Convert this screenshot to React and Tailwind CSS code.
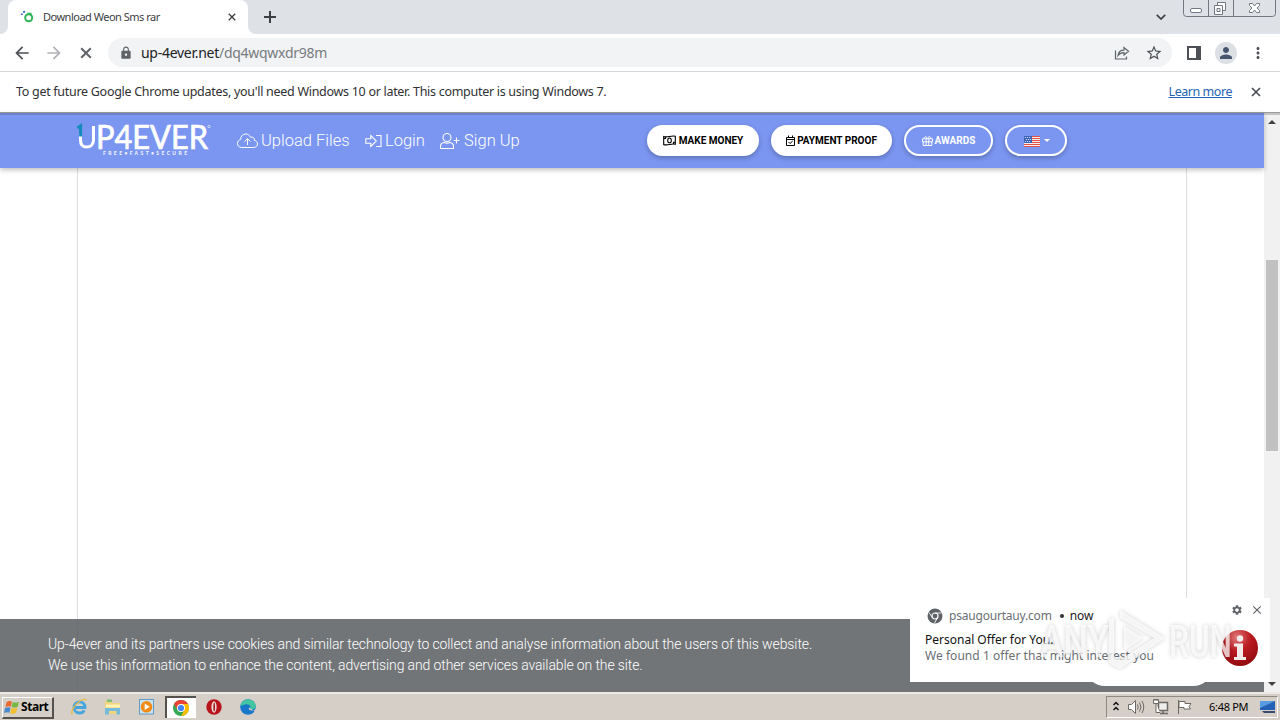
import { MdLock, MdStarBorder, MdPerson, MdMoreVert, MdArrowBack, MdArrowForward, MdClose, MdSettings } from "react-icons/md"

const ui = "font-['Noto_Sans',sans-serif]"
const web = "font-['Roboto',sans-serif]"

const Favicon = () => (
  <svg className="w-4 h-4" viewBox="0 0 16 16" fill="none">
    <path d="M1.800 6V4.500M3.300 3.500L4.800 2.200" stroke="#2f62c8" strokeWidth="1.800" />
    <circle cx="8.700" cy="8.800" r="3.500" stroke="#2fb457" strokeWidth="2" />
    <path d="M6.500 3.800h5v2.500z" fill="#2fb457" />
  </svg>
)

const CrossIcon = ({ className }) => (
  <svg className={className} viewBox="0 0 10 10" fill="none" stroke="currentColor" strokeWidth="1.7">
    <path d="M1 1l8 8M9 1L1 9" />
  </svg>
)

const ShareIcon = () => (
  <svg className="w-4 h-4" viewBox="0 0 16 16" fill="none" stroke="#5f6368" strokeWidth="1.2">
    <path d="M1.500 5.500V14H12.500V11.500" />
    <path d="M4 10.500C4.500 6.800 7 5.200 10 5.200V2.500L14.500 6.300L10 10V7.700C7.500 7.700 5.500 8.500 4 10.500z" />
  </svg>
)

const PanelIcon = () => (
  <svg className="w-[14px] h-[14px]" viewBox="0 0 14 14">
    <rect x="1" y="1" width="12" height="12" fill="none" stroke="#4d5156" strokeWidth="2" />
    <path d="M9 1h4v12H9z" fill="#4d5156" />
  </svg>
)

const CloudIcon = () => (
  <svg className="w-[21px] h-[16px]" viewBox="0 0 21 16" fill="none" stroke="#fff" strokeWidth="1">
    <path d="M4.5 14.5 H16.5 C19 14.5 20.5 12.8 20.5 11 C20.5 9 19 7.7 17.4 7.5 C17.8 5 16 3.6 13.7 4.3 C12.5 2 10.8 1 8.8 1 C5.8 1 3.6 3.2 3.7 6.3 C1.7 7 .5 8.5 .5 10.5 C.5 12.8 2.3 14.5 4.5 14.5z" />
    <path d="M10.500 12V5.800M7.500 8.600l3-3 3 3" />
  </svg>
)

const LoginIcon = () => (
  <svg className="w-[17px] h-[14px]" viewBox="0 0 17 14" fill="none" stroke="#fff" strokeWidth="1.100">
    <path d="M.8 4.700h5V1.500L11.300 7l-5.500 5.500V9.300h-5z" />
    <path d="M11 1.500h5v11h-5" />
  </svg>
)

const UserPlusIcon = () => (
  <svg className="w-[20px] h-[16px]" viewBox="0 0 20 16" fill="none" stroke="#fff" strokeWidth="1.100">
    <circle cx="7" cy="4.500" r="4" />
    <path d="M4.300 9.500C2 9.800.5 11.200.5 13.200V15.500H13.500V13.200C13.500 11.200 12 9.800 9.700 9.500C8 10.300 6 10.300 4.300 9.500z" />
    <path d="M13.500 7.500h6M16.500 4.500v6" />
  </svg>
)

const MoneyIcon = () => (
  <svg className="w-[13px] h-[11px]" viewBox="0 0 13 11" fill="none" stroke="#000" strokeWidth="1.1">
    <path d="M.7 1.500C4.500 3 8 .2 12.300 1.200V9.300C8.500 8.200 5 10.800.7 9.600z" />
    <ellipse cx="6.500" cy="5.400" rx="1.800" ry="2.400" />
    <path d="M.7 3.500h1.800V2M12.300 7.200h-1.800v1.800" />
  </svg>
)

const CalendarIcon = () => (
  <svg className="w-[9px] h-[11px]" viewBox="0 0 9 11" fill="none" stroke="#000" strokeWidth="1">
    <path d="M.5 2.500h8v8h-8zM.5 4.500h8M2.500.5v2M6.500.5v2M2.500 7l1.500 1.500 2.700-2.500" />
  </svg>
)

const GiftIcon = () => (
  <svg className="w-[11px] h-[10px]" viewBox="0 0 11 10" fill="none" stroke="#fff" strokeWidth="1">
    <path d="M.5 2.800h10v3H.5zM1.200 5.800v3.700h8.600V5.800M4.200 2.800v6.700M6.800 2.800v6.700M5.500 2.600C4.700.2 2 .1 2.200 2.600M5.500 2.600C6.300.2 9 .1 8.800 2.600" />
  </svg>
)

const FlagUS = () => (
  <svg className="w-4 h-[11px] mt-[2px]" viewBox="0 0 16 11" shapeRendering="crispEdges">
    <path fill="#f8eeee" d="M0 0h16v11H0z" />
    <path fill="#df5145" d="M0 0h16v1H0zM0 2h16v1H0zM0 4h16v1H0zM0 6h16v1H0zM0 8h16v1H0zM0 10h16v1H0z" />
    <path fill="#4064b4" d="M0 0h8v7H0z" />
    <path fill="#c9d6f0" d="M1 1h1v1H1zM3 1h1v1H3zM5 1h1v1H5zM2 3h1v1H2zM4 3h1v1H4zM6 3h1v1H6zM1 5h1v1H1zM3 5h1v1H3zM5 5h1v1H5z" />
  </svg>
)

const Logo = () => (
  <svg className="overflow-visible" width="134" height="34" viewBox="0 0 134 34" fill="none">
    <path d="M3.500 12V18C3.500 22.300 5.700 25 9.500 25C13.800 25 16.500 22.300 16.500 18V4" stroke="#fff" strokeWidth="3" />
    <path d="M.5 6L3.600 3.800V14.500" stroke="#1689bd" strokeWidth="3" />
    <text x="19" y="26.500" fill="#fff" fontFamily="Lato" fontWeight="400" stroke="#fff" strokeWidth=".7" fontSize="32" textLength="112" lengthAdjust="spacingAndGlyphs">P4EVER</text>
    <text x="26" y="33" fill="#fff" fillOpacity=".9" fontFamily="Lato" fontWeight="900" fontSize="5" textLength="84">FREE•FAST•SECURE</text>
    <circle cx="132" cy="4.500" r="1.200" stroke="#fff" strokeWidth=".6" />
  </svg>
)

const BrowserTabs = () => (
  <div className="h-[34px] bg-[#dee1e6] flex justify-between shrink-0">
    <div className="flex">
      <div className="w-2 bg-white"><div className="h-full bg-[#dee1e6] rounded-br-lg" /></div>
      <div className="w-[240px] h-[34px] bg-white rounded-t-lg flex items-center pl-3 pr-3">
        <Favicon />
        <span className="ml-[7px] text-[11px] tracking-[-0.5px] text-[#3c4043] whitespace-nowrap">Download Weon Sms rar</span>
        <CrossIcon className="ml-auto w-2 h-2 text-[#3c4043]" />
      </div>
      <div className="w-2 bg-white"><div className="h-full bg-[#dee1e6] rounded-bl-lg" /></div>
      <svg className="ml-2 mt-[11px]" width="12" height="12" viewBox="0 0 12 12" stroke="#3c4043" strokeWidth="2">
        <path d="M6 0v12M0 6h12" />
      </svg>
    </div>
    <div className="flex items-start">
      <svg className="mt-[14px] mr-[17px]" width="10" height="6" viewBox="0 0 10 6" fill="none" stroke="#3c4043" strokeWidth="1.700">
        <path d="M.8.8L5 5 9.200.8" />
      </svg>
      <svg className="mr-1" width="93" height="17" viewBox="0 0 93 17" fill="none" stroke="#73777f">
        <path d="M.5 0V13.500Q.5 16.500 3.500 16.500H89.500Q92.500 16.500 92.500 13.500V0M25.500 0V16M50.500 0V16" />
        <rect x="7.500" y="8.500" width="11" height="4" rx="1.500" fill="#fff" />
        <path d="M34.500 5V2.500h8v8h-2.500M31.500 5.500h8v9h-8zM34 8.500h3v3h-3z" fill="#fff" />
        <path d="M66.500 3.500h3l2 2.500 2-2.500h3v2l-2.500 2.500 2.500 2.500v2h-3l-2-2.500-2 2.500h-3v-2l2.500-2.500-2.500-2.500z" fill="#fff" />
      </svg>
    </div>
  </div>
)

const Toolbar = () => (
  <div className="h-[38px] bg-white border-b border-[#d5d7da] flex items-center shrink-0">
    <div className="flex items-center gap-3 pl-3 w-[108px] shrink-0">
      <MdArrowBack className="w-5 h-5 text-[#4d5156]" />
      <MdArrowForward className="w-5 h-5 text-[#b0b2b5]" />
      <CrossIcon className="w-3 h-3 ml-1 text-[#5f6368]" />
    </div>
    <div className="w-[1064px] h-[29px] rounded-full bg-[#f1f3f4] flex items-center pl-[11px] pr-[9px]">
      <MdLock className="w-[14px] h-[14px] text-[#5f6368]" />
      <span className="ml-2 text-[14px] tracking-[-0.28px] text-[#202124]">
        up-4ever.net<span className="text-[#777b80]">/dq4wqwxdr98m</span>
      </span>
      <div className="ml-auto flex items-center gap-[15px]">
        <ShareIcon />
        <MdStarBorder className="w-[18px] h-[18px] text-[#4d5156]" />
      </div>
    </div>
    <div className="ml-[15px] flex items-center">
      <PanelIcon />
      <div className="ml-[14px] w-[22px] h-[22px] rounded-full bg-[#dcdfe3] flex items-center justify-center">
        <MdPerson className="w-[18px] h-[18px] text-[#46546e]" />
      </div>
      <MdMoreVert className="ml-3 w-[18px] h-[18px] text-[#4d5156]" />
    </div>
  </div>
)

const InfoBar = () => (
  <div className="h-[41px] bg-white border-b border-[#9a9ca0] flex items-center pl-4 pr-[19px] text-[12.5px] text-[#303134] shrink-0">
    <span className="tracking-[-0.29px] whitespace-nowrap">
      To get future Google Chrome updates, you'll need Windows 10 or later. This computer is using Windows 7.
    </span>
    <span className="ml-auto tracking-[-0.45px] text-[#2464b4] underline">Learn more</span>
    <CrossIcon className="ml-[19px] w-[10px] h-[10px] text-[#4d5156]" />
  </div>
)

const NavBar = () => (
  <nav className={`relative h-[55px] bg-[#7b96f1] shadow-[0_2px_5px_rgba(0,0,0,0.25)] border-t-2 border-[#6c80c5] flex items-start shrink-0 text-white ${web}`}>
    <div className="ml-[77px] mt-[7px]"><Logo /></div>
    <div className="ml-[26px] mt-[14px] h-6 flex items-center font-light text-[16.5px] whitespace-nowrap">
      <span className="w-[128px] flex items-center gap-[3px]"><CloudIcon />Upload Files</span>
      <span className="w-[75px] flex items-center gap-[3px]"><LoginIcon />Login</span>
      <span className="w-[82px] flex items-center gap-[4px]"><UserPlusIcon />Sign Up</span>
    </div>
    <div className="ml-[125px] mt-[10px] flex gap-3 text-[10px] font-bold whitespace-nowrap">
      <span className="w-[112px] h-[31px] rounded-full bg-white text-black flex items-center justify-center gap-[3px] shadow-[0_2px_5px_rgba(0,0,0,0.25)]"><MoneyIcon />MAKE MONEY</span>
      <span className="w-[121px] h-[31px] rounded-full bg-white text-black flex items-center justify-center gap-[2px] shadow-[0_2px_5px_rgba(0,0,0,0.25)]"><CalendarIcon />PAYMENT PROOF</span>
      <span className="w-[89px] h-[31px] rounded-full border-2 border-white flex items-center justify-center gap-[2px] shadow-[0_2px_5px_rgba(0,0,0,0.25)]"><GiftIcon />AWARDS</span>
      <span className="w-[62px] h-[31px] rounded-full border-2 border-white flex items-center pl-[17px] gap-1 shadow-[0_2px_5px_rgba(0,0,0,0.25)]">
        <FlagUS />
        <span className="w-0 h-0 border-x-[3px] border-x-transparent border-t-[3px] border-t-white" />
      </span>
    </div>
  </nav>
)

const CookieBar = () => (
  <div className={`absolute left-0 bottom-0 w-[1264px] h-[73px] bg-[#56595d]/83 pl-12 pt-[15px] text-white font-light text-[14px] leading-[21px] ${web}`}>
    <p className="tracking-[-0.105px]">Up-4ever and its partners use cookies and similar technology to collect and analyse information about the users of this website.</p>
    <p className="tracking-[-0.12px]">We use this information to enhance the content, advertising and other services available on the site.</p>
  </div>
)

const Watermark = () => (
  <svg className="absolute left-[128px] top-[8px] overflow-visible" width="200" height="70" viewBox="0 0 200 70">
    <g className="drop-shadow-[0_0_2px_rgba(0,0,0,0.25)]" fill="#fff" fillOpacity=".75">
      <text x="2" y="51" fontFamily="Roboto" fontWeight="500" fontSize="45" textLength="69" lengthAdjust="spacingAndGlyphs">ANY</text>
      <text x="131" y="51" fontFamily="Roboto" fontWeight="500" fontSize="45" textLength="63" lengthAdjust="spacingAndGlyphs">RUN</text>
      <path fillRule="evenodd" d="M82 4L127 32L82 63L71 57V14L76 11V50L82 54L116 32L82 12zM86 20L105 32L86 45z" />
    </g>
  </svg>
)

const Notification = () => (
  <div className="absolute left-[910px] bottom-[10px] w-[360px] h-[84px] bg-white">
    <div className="flex items-center h-9 pl-[17px] pr-[6px] text-[12px]">
      <svg className="w-4 h-4" viewBox="0 0 16 16">
        <circle cx="8" cy="8" r="7.500" fill="#5f6368" />
        <circle cx="8" cy="8" r="3" fill="#5f6368" stroke="#fff" strokeWidth="1.200" />
        <path d="M8 5h6.500M5.400 9.500L2 4.500M10.600 9.500L7.500 15" stroke="#fff" strokeWidth=".9" />
      </svg>
      <span className="ml-[6px] tracking-[-0.2px] text-[#6b6f74]">psaugourtauy.com</span>
      <span className="ml-2 w-1 h-1 rounded-full bg-[#303134]" />
      <span className="ml-[6px] text-[#202124]">now</span>
      <MdSettings className="ml-auto mb-3 w-3 h-3 text-[#5f6368]" />
      <MdClose className="ml-[7px] mb-3 w-[14px] h-[14px] text-[#5f6368]" />
    </div>
    <div className="pl-[15px] -mt-[2px] text-[12px] leading-4 whitespace-nowrap">
      <p className="text-[#111]">Personal Offer for You.</p>
      <p className="tracking-[0.04px] text-[#6b6f74]">We found 1 offer that might interest you</p>
    </div>
    <svg className="absolute left-[311px] top-[31px]" width="38" height="38" viewBox="0 0 38 38">
      <defs>
        <radialGradient id="info" cx=".4" cy=".2" r=".85">
          <stop offset="0" stopColor="#e1777a" />
          <stop offset=".45" stopColor="#ba1b21" />
          <stop offset="1" stopColor="#8e080e" />
        </radialGradient>
      </defs>
      <circle cx="19" cy="19" r="18" fill="url(#info)" />
      <circle cx="19" cy="9.500" r="3.200" fill="#f4eaea" />
      <path d="M13 14.500h9V28h3v3H13v-3h3V17.500h-3z" fill="#f4eaea" />
    </svg>
    <Watermark />
  </div>
)

const ScrollBar = () => (
  <div className="w-4 bg-[#f1f1f1] border-t-2 border-[#c4c4c4] flex flex-col items-center shrink-0">
    <span className="mt-[5px] border-x-4 border-x-transparent border-b-4 border-b-[#404040]" />
    <span className="mt-[136px] w-3 h-[191px] bg-[#c1c1c1]" />
    <span className="mt-auto mb-[6px] border-x-4 border-x-transparent border-t-4 border-t-[#404040]" />
  </div>
)

const IeIcon = () => (
  <svg className="w-[18px] h-[18px]" viewBox="0 0 18 18" fill="none">
    <path d="M4 9.500H15C15 6 12.500 3.800 9.500 3.800S4 6.200 4 9.500s2.500 5.500 5.500 5.500c2 0 3.800-.8 4.700-2.700" stroke="#45a5df" strokeWidth="2.800" />
    <path d="M2.500 16.500C-1.500 13 11-1.500 16.500 2" stroke="#e4bd45" strokeWidth="1.400" />
  </svg>
)

const FolderIcon = () => (
  <svg className="w-[18px] h-[18px]" viewBox="0 0 18 18">
    <path d="M1 3h6l1 2h8v11H1z" fill="#efd67d" />
    <path d="M3 1.500h5V4H3z" fill="#81bd75" />
    <path d="M2 6.500h14v3H2z" fill="#fff2b5" />
    <path d="M1 10h15v6.500h-3.500V13H5v3.500H1z" fill="#76bbdc" />
  </svg>
)

const MediaIcon = () => (
  <svg className="w-[18px] h-[18px]" viewBox="0 0 18 18">
    <rect x="1.500" y="1.500" width="14" height="14.500" fill="#c8e3f4" stroke="#609ac6" />
    <circle cx="8.500" cy="8.800" r="5.800" fill="#f28b16" />
    <path d="M6.700 5.500v6.600l5-3.300z" fill="#fff" />
  </svg>
)

const ChromeIcon = () => (
  <svg className="w-4 h-4" viewBox="0 0 16 16">
    <circle cx="8" cy="8" r="8" fill="#34a853" />
    <path d="M1.070 4A8 8 0 0 1 14.930 4H8L4.540 10z" fill="#ea4335" />
    <path d="M14.930 4A8 8 0 0 1 8 16L11.460 10 8 4z" fill="#fbbc04" />
    <circle cx="8" cy="8" r="4" fill="#fff" />
    <circle cx="8" cy="8" r="3.100" fill="#4285f4" />
  </svg>
)

const OperaIcon = () => (
  <svg className="w-4 h-4" viewBox="0 0 16 16">
    <circle cx="8" cy="8" r="7.700" fill="#b9141b" />
    <ellipse cx="8" cy="8" rx="2.600" ry="5.700" fill="#f1dedb" />
    <ellipse cx="8.200" cy="8" rx=".9" ry="4.500" fill="#9b2528" />
  </svg>
)

const EdgeIcon = () => (
  <svg className="w-4 h-4" viewBox="0 0 16 16">
    <circle cx="8" cy="8" r="7.800" fill="#1877c9" />
    <path d="M.4 7C1.500-2 15.500-1.500 15.800 7c0 3-3 4-5.800 2.500C11.500 7 9 4.800 6 5.200 3 5.500 1 7 .4 7z" fill="#42c5a0" />
    <path d="M9 8.500C8 11 11 12.500 14.500 11L16 9.500V13z" fill="#d5cfc7" />
  </svg>
)

const WindowsLogo = () => (
  <svg className="w-[16px] h-[15px]" viewBox="0 0 15 14">
    <path d="M2.500 2Q5 .2 7.500 1.500L6.300 6.300Q4 5.300 1.200 6.800z" fill="#e8682d" />
    <path d="M8.300 1.800Q11 3 14 1.500L12.800 6.300Q10 7.800 7.100 6.500z" fill="#76b843" />
    <path d="M1 7.500Q4 6 6.100 7.200L5 12Q2.500 10.800 0 12.300z" fill="#4688cd" />
    <path d="M7 7.300Q10 8.600 12.600 7.200L11.300 12Q8.500 13.600 5.800 12.300z" fill="#f2bf32" />
  </svg>
)

const TaskBar = () => (
  <div className="h-7 bg-[#d5cfc7] border-t-2 border-[#ece9e4] flex items-center shrink-0">
    <div className="ml-[2px] w-[52px] h-[22px] mt-[1px] flex items-center gap-[1px] pl-px border-t border-l border-t-white border-l-white border-r-2 border-b-2 border-r-[#55524e] border-b-[#55524e] text-[12px] font-bold tracking-[-0.45px] text-black">
      <WindowsLogo />
      <span>Start</span>
    </div>
    <div className="flex items-center ml-[16px]">
      <div className="w-[34px]"><IeIcon /></div>
      <div className="w-[34px]"><FolderIcon /></div>
      <div className="w-[27px]"><MediaIcon /></div>
      <div className="w-[31px] h-[22px] bg-white border-t-2 border-l-2 border-[#55524e] flex items-center pl-[6px]"><ChromeIcon /></div>
      <div className="ml-[10px] w-[34px]"><OperaIcon /></div>
      <EdgeIcon />
    </div>
    <div className="ml-auto mr-[2px] w-[172px] h-[22px] border border-[#8e8981] border-r-white border-b-white flex items-center pl-[6px] text-[11px] text-black">
      <svg width="80" height="18" viewBox="0 0 80 18" fill="none" stroke="#6d6a65" strokeWidth="1">
        <path d="M.5 7l2.500-2.500L5.500 7M.5 12L3 9.500 5.500 12" stroke="#111" strokeWidth="1.500" />
        <path d="M15.500 6.500h3l4-4v13l-4-4h-3z" fill="#fff" />
        <path d="M24.500 6.500q1.500 2.500 0 5M26.500 4.500q3 4.500 0 9M29 3q3.500 6 0 12" />
        <path d="M45.500 4.500h9v8h-9zM47 15.500h8M50 12.500v3" fill="#eee" strokeWidth="1.500" />
        <path d="M40.500 1.500h5v4h-5zM42 1v2M44 1v2M43 6v8.500h4" fill="#fff" />
        <path d="M65.500 2v14M66 3.500h6v2h6l-2 3 1.500 2.500H71V9.500h-5z" fill="#fff" />
      </svg>
      <span className="ml-4 tracking-[-0.3px] whitespace-nowrap">6:48 PM</span>
      <svg className="ml-auto mr-[2px]" width="15" height="14" viewBox="0 0 15 14">
        <path d="M0 1h15v9H0z" fill="#2461b6" />
        <path d="M0 1h15L0 8z" fill="#579be0" />
        <path d="M2 11h13v2H4z" fill="#354c6d" />
      </svg>
    </div>
  </div>
)

export default function App() {
  return (
    <div className={`w-[1280px] h-[720px] overflow-hidden flex flex-col bg-white ${ui}`}>
      <BrowserTabs />
      <Toolbar />
      <InfoBar />
      <div className="relative flex-1 min-h-0 flex">
        <div className="w-[1264px] flex flex-col">
          <NavBar />
          <main className="ml-[77px] w-[1110px] flex-1 border-x border-[#dcdddf]" />
        </div>
        <ScrollBar />
        <CookieBar />
        {/* button under the notification, only its lower edge shows */}
        <div className="absolute left-[1085px] bottom-[6px] w-[128px] h-10 rounded-full bg-white" />
        <Notification />
      </div>
      <TaskBar />
    </div>
  )
}
